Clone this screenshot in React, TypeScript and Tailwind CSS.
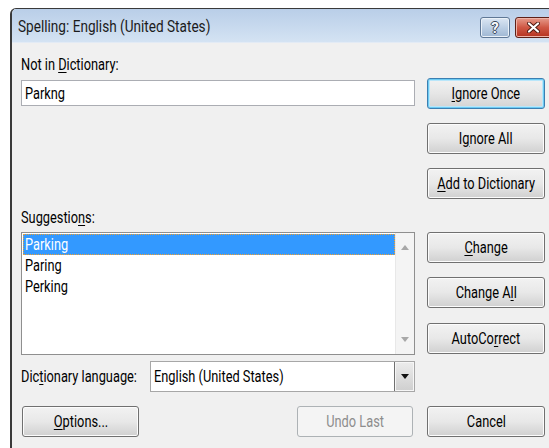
import React from 'react';

const font = { fontFamily: 'Roboto, "Noto Sans", sans-serif' };

// narrow text, Segoe-ish proportions
function T({ children, left = false, className = '' }: { children: React.ReactNode; left?: boolean; className?: string }) {
  return (
    <span className={`inline-block whitespace-nowrap scale-x-[0.8] ${left ? 'origin-left' : 'origin-center'} ${className}`}>
      {children}
    </span>
  );
}

function Btn({ children, focused = false, disabled = false, className = '' }: { children: React.ReactNode; focused?: boolean; disabled?: boolean; className?: string }) {
  const frame = disabled
    ? 'border-[#adb2b5] bg-[#f4f4f4] text-[#8d8d8d]'
    : focused
      ? 'border-[#3c7fb1] bg-gradient-to-b from-[#f2f2f2] via-[#e6e6e6] to-[#d3d3d3] text-black shadow-[inset_0_0_0_1px_#6ccbf3,inset_0_0_0_2px_#b9e6fa]'
      : 'border-[#707070] bg-gradient-to-b from-[#f2f2f2] via-[#e8e8e8] to-[#d0d0d0] text-black shadow-[inset_0_0_0_1px_#fcfcfc]';
  return (
    <div className={`flex h-[31px] items-center justify-center rounded-[3px] border text-[16px] leading-4 ${frame} ${className}`}>
      <T>{children}</T>
    </div>
  );
}

export default function App() {
  return (
    <div className="h-[448px] w-[549px] overflow-hidden bg-white pl-[10px] pt-[8px]" style={font}>
      <div className="h-[460px] w-[560px] overflow-hidden rounded-tl-[6px] border-l-2 border-t border-[#3a3a3a]">
        {/* caption */}
        <div className="flex h-[34px] items-center border-b border-[#e3ebf5] bg-gradient-to-b from-[#b9cee8] to-[#d4e3f3] pl-[6px]">
          <T left className="text-[17px] leading-5 text-[#1b1b1b]">Spelling: English (United States)</T>
          <div className="ml-auto mr-[7px] flex gap-[5px] self-start pt-[8px]">
            <div className="flex h-[21px] w-[30px] items-center justify-center rounded-[3px] border border-[#5f7896] bg-gradient-to-b from-[#dce7f3] via-[#bccfe4] to-[#9fb7d3] shadow-[inset_0_0_0_1px_#eaf1f8]">
              <span className="text-[15px] font-bold leading-4 text-[#f7f9fc] [text-shadow:1px_0_0_#3c4a5b,-1px_0_0_#3c4a5b,0_1px_0_#3c4a5b,0_-1px_0_#3c4a5b]">?</span>
            </div>
            <div className="flex h-[21px] w-[48px] items-center justify-center rounded-[3px] border border-[#5e2118] bg-gradient-to-b from-[#e59a8b] via-[#cf5744] to-[#b5321f] pr-[12px] shadow-[inset_0_0_0_1px_#eeb4a8]">
              <svg width="13" height="11" viewBox="0 0 13 11">
                <path d="M2 1.5 L11 9.5 M11 1.5 L2 9.5" stroke="#4e1a12" strokeWidth="4" strokeLinecap="round" />
                <path d="M2 1.5 L11 9.5 M11 1.5 L2 9.5" stroke="#ffffff" strokeWidth="2.2" strokeLinecap="round" />
              </svg>
            </div>
          </div>
        </div>

        {/* body */}
        <div className="flex h-full gap-[12px] bg-[#f0f0f0] pl-[9px] text-[16px] leading-4 text-black">
          <div className="flex w-[394px] flex-col">
            <div className="mt-[14px] h-4">
              <T left>Not in <u className="underline-offset-2">D</u>ictionary:</T>
            </div>
            <div className="mt-[7px] flex h-[26px] items-center border border-[#abadb3] bg-white pl-[3px] pt-[2px]">
              <T left>Parkng</T>
            </div>

            <div className="mt-[104px] h-4">
              <T left>Suggestio<u className="underline-offset-2">n</u>s:</T>
            </div>
            <div className="mt-[6px] flex h-[123px] border border-[#8f8f8f] bg-white">
              <div className="flex flex-1 flex-col pl-px pt-px">
                <div className="flex h-[21px] items-center border border-dotted border-[#f0a030] bg-[#3399ff] pl-px text-white">
                  <T left>Parking</T>
                </div>
                <div className="flex h-[21px] items-center pl-[2px]">
                  <T left>Paring</T>
                </div>
                <div className="flex h-[21px] items-center pl-[2px]">
                  <T left>Perking</T>
                </div>
              </div>
              <div className="flex w-[19px] flex-col items-center justify-between border-l border-[#e8e8e8] bg-[#f4f4f4] py-[12px]">
                <svg width="8" height="5" viewBox="0 0 8 5"><path d="M0 5 L4 0 L8 5 Z" fill="#a8a8a8" /></svg>
                <svg width="8" height="5" viewBox="0 0 8 5"><path d="M0 0 L8 0 L4 5 Z" fill="#a8a8a8" /></svg>
              </div>
            </div>

            <div className="mt-[6px] flex h-[31px] items-center">
              <div className="w-[129px]">
                <T left>Dic<u className="underline-offset-2">t</u>ionary language:</T>
              </div>
              <div className="flex h-full flex-1 items-center border border-[#a7a7a7] bg-white pl-[3px]">
                <T left className="flex-1">English (United States)</T>
                <div className="flex h-full w-[20px] items-center justify-center border-l border-[#707070] bg-gradient-to-b from-[#ececec] to-[#cfcfcf] shadow-[inset_0_0_0_1px_#f6f6f6]">
                  <svg width="8" height="5" viewBox="0 0 8 5"><path d="M0 0 L8 0 L4 5 Z" fill="#111111" /></svg>
                </div>
              </div>
            </div>

            <div className="mt-[14px] flex justify-between">
              <Btn className="ml-px w-[117px]"><u className="underline-offset-2">O</u>ptions...</Btn>
              <Btn disabled className="mr-[2px] w-[116px]">Undo Last</Btn>
            </div>
          </div>

          <div className="flex w-[118px] flex-col">
            <Btn focused className="mt-[35px]"><u className="underline-offset-2">I</u>gnore Once</Btn>
            <Btn className="mt-[14px]">I<u className="underline-offset-2">g</u>nore All</Btn>
            <Btn className="mt-[14px]"><u className="underline-offset-2">A</u>dd to Dictionary</Btn>
            <Btn className="mt-[33px]"><u className="underline-offset-2">C</u>hange</Btn>
            <Btn className="mt-[14px]">Change A<u className="underline-offset-2">l</u>l</Btn>
            <Btn className="mt-[15px]">AutoCo<u className="underline-offset-2">r</u>rect</Btn>
            <Btn className="mt-[52px]">Cancel</Btn>
          </div>
        </div>
      </div>
    </div>
  );
}
